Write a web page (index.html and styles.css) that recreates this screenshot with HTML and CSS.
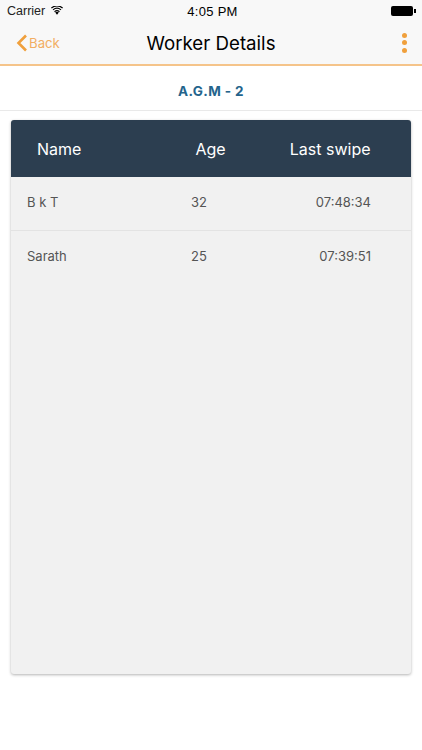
FILE: index.html
```html
<!DOCTYPE html>
<html lang="en">
<head>
<meta charset="utf-8">
<title>Worker Details</title>
<link rel="stylesheet" href="styles.css">
</head>
<body>
<header class="topbar">
  <div class="status">
    <div class="status-left">
      <span>Carrier</span>
      <svg class="wifi" width="12" height="9" viewBox="0 0 14 10"><path d="M7 10 4.9 7.4a3.3 3.3 0 0 1 4.2 0Z" fill="#000"/><path d="M3.7 5.9a5.2 5.2 0 0 1 6.6 0l-.8 1a4 4 0 0 0-5 0Z" fill="#000"/><path d="M1.9 3.7a8 8 0 0 1 10.2 0l-.9 1.1a6.6 6.6 0 0 0-8.4 0Z" fill="#000"/><path d="M0 1.5a11 11 0 0 1 14 0l-.9 1.1a9.6 9.6 0 0 0-12.2 0Z" fill="#000"/></svg>
    </div>
    <div class="status-time">4:05 PM</div>
    <div class="battery"><span class="battery-body"></span><span class="battery-tip"></span></div>
  </div>
  <nav class="nav">
    <div class="back">
      <svg width="12" height="18" viewBox="0 0 12 18"><path d="M10 1.5 2.5 9l7.5 7.5" fill="none" stroke="#f0a03c" stroke-width="2.6"/></svg>
      <span>Back</span>
    </div>
    <h1 class="title">Worker Details</h1>
    <div class="more"><i></i><i></i><i></i></div>
  </nav>
</header>
<div class="subhead">A.G.M - 2</div>
<section class="card">
  <div class="row head">
    <div class="col-name">Name</div>
    <div class="col-age">Age</div>
    <div class="col-swipe">Last swipe</div>
  </div>
  <div class="row item">
    <div class="col-name">B k T</div>
    <div class="col-age">32</div>
    <div class="col-swipe">07:48:34</div>
  </div>
  <div class="row item">
    <div class="col-name">Sarath</div>
    <div class="col-age">25</div>
    <div class="col-swipe">07:39:51</div>
  </div>
</section>
</body>
</html>
```
FILE: styles.css
```css
* { box-sizing: border-box; }
html, body { margin: 0; padding: 0; }
body {
  width: 422px;
  height: 750px;
  background: #fff;
  font-family: "Liberation Sans", Arial, sans-serif;
  overflow: hidden;
}
.topbar {
  height: 66px;
  background: #f8f8f8;
  border-bottom: 2px solid #f5c48a;
}
.status {
  height: 22px;
  padding: 0 6px 0 7px;
  display: grid;
  grid-template-columns: 1fr auto 1fr;
  align-items: center;
  font-size: 12.5px;
  color: #000;
}
.status-left { display: flex; align-items: center; gap: 6px; color: #222; }
.wifi { margin-top: -2px; }
.status-time { font-size: 13px; letter-spacing: .3px; margin-left: 2px; }
.battery { justify-self: end; display: flex; align-items: center; }
.battery-body { width: 22px; height: 10px; background: #000; border-radius: 2px; }
.battery-tip { width: 2px; height: 4px; background: #000; margin-left: 1px; }
.nav {
  height: 42px;
  position: relative;
  display: flex;
  align-items: center;
  justify-content: space-between;
  padding: 0 15px 0 16px;
}
.back {
  display: flex;
  align-items: center;
  gap: 1px;
  color: #f2ae62;
  font-size: 13.2px;
  font-family: "Inter", sans-serif;
  margin-top: -1px;
}
.title {
  position: absolute;
  left: 0;
  right: 0;
  top: 10px;
  margin: 0;
  text-align: center;
  font-size: 18.7px;
  line-height: 24px;
  font-weight: 400;
  color: #000;
  font-family: "Inter", sans-serif;
}
.more { display: flex; flex-direction: column; gap: 2.5px; margin-top: -1px; }
.more i { display: block; width: 5px; height: 5px; border-radius: 50%; background: #f0a03c; }
.subhead {
  height: 45px;
  padding-top: 5px;
  display: flex;
  align-items: center;
  justify-content: center;
  border-bottom: 1px solid #e9e9e9;
  color: #24648c;
  font-size: 13.5px;
  font-weight: 700;
  letter-spacing: .4px;
  font-family: "Inter", sans-serif;
}
.card {
  margin: 9px 11px 0 10.5px;
  height: 554px;
  background: #f1f1f1;
  border-radius: 3px;
  box-shadow: 0 1px 3px rgba(0, 0, 0, .3);
  font-family: "Inter", sans-serif;
}
.row {
  display: grid;
  grid-template-columns: 180px 55px 1fr;
  align-items: center;
}
.head {
  height: 57px;
  background: #2c3e50;
  color: #fff;
  font-size: 16px;
  border-radius: 3px 3px 0 0;
}
.item {
  height: 53.5px;
  padding-bottom: 2px;
  color: #555;
  font-size: 13px;
  border-bottom: 1px solid #e3e3e3;
}
.item:last-child { border-bottom: 0; }
.col-name { padding-left: 26.5px; }
.head .col-age { padding-left: 5px; }
.item .col-age { padding-left: 0.5px; }
.item .col-name { padding-left: 16.5px; }
.col-swipe { text-align: right; padding-right: 40px; }
.head .col-swipe { padding-right: 40.5px; }
```
